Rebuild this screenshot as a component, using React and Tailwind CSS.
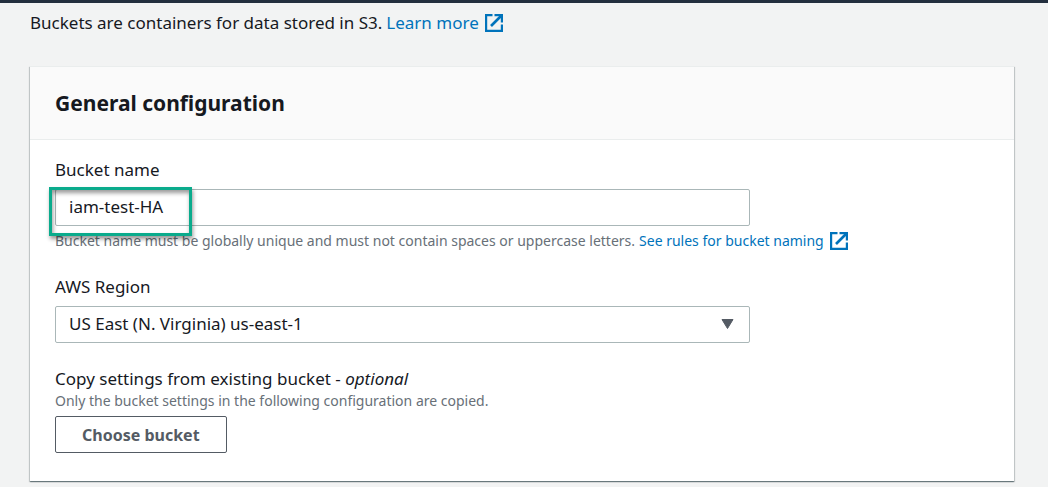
function ExternalIcon() {
  return (
    <svg
      className="inline-block size-[18px] shrink-0"
      viewBox="0 0 18 18"
      fill="none"
      stroke="currentColor"
      strokeWidth="2.2"
      aria-hidden="true"
    >
      <path d="M7.5 1.1H1.1v15.8h15.8v-6.4" />
      <path d="M9.5 1.1h7.4v7.4" />
      <path d="M16.5 1.5L6 12" strokeWidth="2.6" />
    </svg>
  );
}

function ExternalLink({ children }) {
  return (
    <a href="#" className="inline-flex items-center gap-1.5 text-[#0073bb]">
      {children}
      <ExternalIcon />
    </a>
  );
}

export default function App() {
  return (
    <div className="min-h-screen border-t-[3px] border-[#232f3e] bg-[#f2f3f3] pr-[34px] pb-1.5 pl-[30px] font-['Noto_Sans','Open_Sans',sans-serif] text-[17px] leading-6 text-[#16191f]">
      <p className="flex flex-wrap gap-x-1 pt-2">
        Buckets are containers for data stored in S3. <ExternalLink>Learn more</ExternalLink>
      </p>

      <section className="mt-[31px] border-t border-[#eaeded] bg-white shadow-[0_1px_1px_0_rgba(0,28,36,0.4),1px_1px_1px_0_rgba(0,28,36,0.15),-1px_1px_1px_0_rgba(0,28,36,0.15)]">
        <header className="border-b border-[#eaeded] bg-[#fafafa] px-[25px] py-5">
          <h2 className="text-[21px] leading-8 font-bold">General configuration</h2>
        </header>

        <div className="flex flex-col gap-6 px-[25px] pt-[18px] pb-7">
          <div>
            <label htmlFor="bucket-name">Bucket name</label>
            <div className="relative mt-[7px] max-w-[695px]">
              <input
                id="bucket-name"
                type="text"
                defaultValue="iam-test-HA"
                className="block h-[37px] w-full rounded-xs border border-[#aab7b8] bg-white px-[13px] pb-0.5"
              />
              <div className="pointer-events-none absolute -top-0.5 -left-1.5 z-10 h-[49px] w-[143px] border-[3px] border-[#0aab8c] shadow-[1px_3px_4px_rgba(0,0,0,0.4),inset_1px_3px_4px_rgba(0,0,0,0.4)]" />
            </div>
            <p className="mt-[5px] flex flex-wrap gap-x-1 text-sm leading-5 text-[#687078]">
              Bucket name must be globally unique and must not contain spaces or uppercase letters.{' '}
              <ExternalLink>See rules for bucket naming</ExternalLink>
            </p>
          </div>

          <div>
            <label htmlFor="region">AWS Region</label>
            <div className="relative mt-[7px] max-w-[695px]">
              <select
                id="region"
                className="block h-[37px] w-full appearance-none rounded-xs border border-[#aab7b8] bg-white px-[13px] pb-0.5"
              >
                <option>US East (N. Virginia) us-east-1</option>
              </select>
              <svg
                className="pointer-events-none absolute top-[13px] right-4 h-[10px] w-[13px] text-[#545b64]"
                viewBox="0 0 13 10"
                aria-hidden="true"
              >
                <path
                  d="M1 .5h11L6.5 9.5z"
                  fill="currentColor"
                  stroke="currentColor"
                  strokeLinejoin="round"
                />
              </svg>
            </div>
          </div>

          <div>
            <h3>
              Copy settings from existing bucket - <em>optional</em>
            </h3>
            <p className="text-sm leading-5 text-[#687078]">
              Only the bucket settings in the following configuration are copied.
            </p>
            <button
              type="button"
              className="mt-[5px] h-[37px] rounded-xs border border-[#545b64] bg-white px-[26px] text-base font-bold text-[#545b64]"
            >
              Choose bucket
            </button>
          </div>
        </div>
      </section>
    </div>
  );
}
